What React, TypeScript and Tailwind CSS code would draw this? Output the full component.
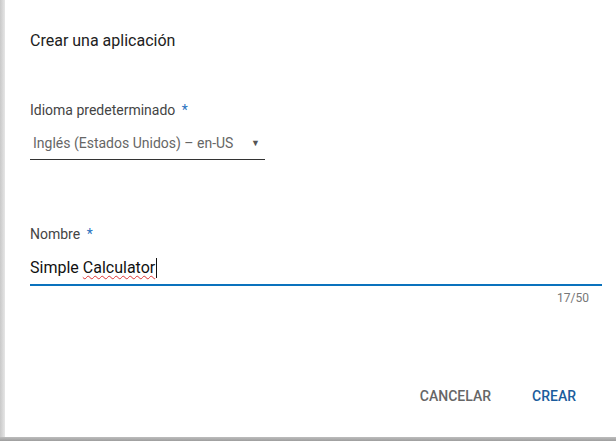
import React from "react";

export default function App() {
  return (
    <div
      className="flex h-[441px] w-[616px] flex-col bg-white"
      style={{ fontFamily: "Roboto, 'Liberation Sans', sans-serif" }}
    >
      <div className="flex flex-1">
        <div className="w-[5px] bg-gradient-to-r from-[#c9c9c9] to-[#e6e6e6]" />
        <div className="flex flex-1 flex-col pl-[25px] pr-[14px]">
          <div className="mt-[29px] h-[24px] text-[16px] leading-[24px] text-[#212121]">
            Crear una aplicación
          </div>
          <div className="mt-[47px] h-[20px] text-[14px] leading-[20px] text-[#444]">
            Idioma predeterminado <span className="ml-[3px] text-[#2a73c0]">*</span>
          </div>
          <div className="mt-[13px] flex w-[235px] items-center border-b border-[#333] pb-[6px] pl-[3px]">
            <span className="h-[20px] text-[14px] leading-[20px] text-[#666]">
              Inglés (Estados Unidos) – en-US
            </span>
            <span className="ml-auto mr-[5px] text-[9px] leading-[20px] text-[#555]">▼</span>
          </div>
          <div className="mt-[64px] h-[20px] text-[14px] leading-[20px] text-[#444]">
            Nombre <span className="ml-[3px] text-[#2a73c0]">*</span>
          </div>
          <div className="mt-[12px] flex h-[24px] items-center text-[16px] leading-[24px] text-[#111]">
            <span>Simple </span>
            <span className="ml-[4px] underline decoration-wavy decoration-[#d33] decoration-1 underline-offset-[2px]">
              Calculator
            </span>
            <span className="ml-[1px] h-[20px] w-px bg-[#111]" />
          </div>
          <div className="mt-[4px] h-[2px] bg-[#0a72bd]" />
          <div className="mt-[4px] h-[16px] pr-[13px] text-right text-[12px] leading-[16px] text-[#777]">
            17/50
          </div>
          <div className="mt-[80px] flex justify-end pr-[26px] text-[14px] font-medium leading-[20px]">
            <span className="text-[#666]">CANCELAR</span>
            <span className="ml-[41px] text-[#1b5c9c]">CREAR</span>
          </div>
        </div>
      </div>
      <div className="h-[4px] bg-gradient-to-b from-[#bdbdbd] to-[#9e9e9e]" />
    </div>
  );
}
